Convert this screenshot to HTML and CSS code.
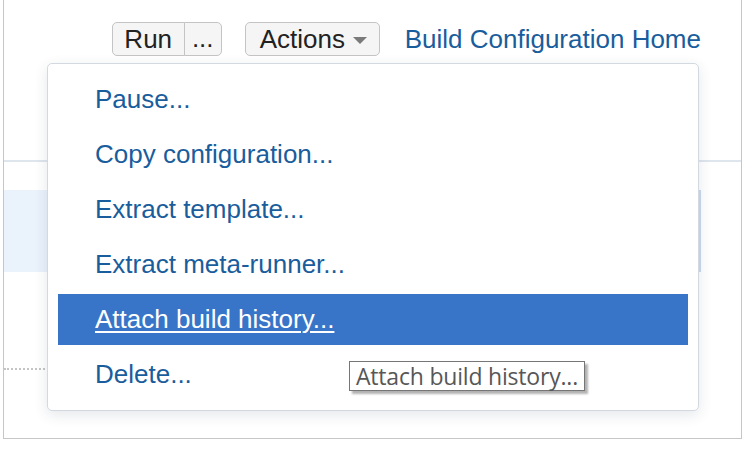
FILE: index.html
```html
<!DOCTYPE html>
<html>
<head>
<meta charset="utf-8">
<link rel="stylesheet" href="styles.css">
</head>
<body>
<div class="frame">
  <div class="toolbar">
    <div class="btn-group">
      <button class="btn btn-run">Run</button><button class="btn btn-more">...</button>
    </div>
    <button class="btn btn-actions">Actions <span class="caret"></span></button>
    <a class="home" href="#">Build Configuration Home</a>
  </div>
  <div class="header-line"></div>
  <div class="row-selected"></div>
  <div class="dotted"></div>

  <ul class="menu">
    <li class="item"><a href="#">Pause...</a></li>
    <li class="item"><a href="#">Copy configuration...</a></li>
    <li class="item"><a href="#">Extract template...</a></li>
    <li class="item"><a href="#">Extract meta-runner...</a></li>
    <li class="item active"><a href="#">Attach build history...</a></li>
    <li class="item"><a href="#">Delete...</a></li>
  </ul>
  <div class="tooltip"><span class="tip-text">Attach build history...</span></div>
</div>
</body>
</html>
```
FILE: styles.css
```css
html, body {
  margin: 0;
  padding: 0;
  background: #ffffff;
}
body {
  font-family: "Liberation Sans", Arial, sans-serif;
  width: 753px;
  height: 454px;
  overflow: hidden;
}
.frame {
  position: relative;
  margin-left: 3px;
  width: 737px;
  height: 438px;
  border: 1px solid #c6c6c6;
  border-top: none;
}
.toolbar {
  height: 160px;
  box-sizing: border-box;
  padding: 22px 40px 0 0;
  display: flex;
  justify-content: flex-end;
  align-items: flex-start;
}
.btn-group {
  display: flex;
}
.btn {
  font-family: "Liberation Sans", Arial, sans-serif;
  font-size: 26px;
  color: #222;
  background: #f5f5f5;
  border: 1px solid #c4c4c4;
  height: 34px;
  padding: 0;
  margin: 0;
  box-sizing: border-box;
  display: flex;
  align-items: center;
  line-height: 1;
}
.btn-run {
  width: 73px;
  justify-content: center;
  border-radius: 5px 0 0 5px;
}
.btn-more {
  width: 38px;
  justify-content: center;
  border-left: 1px solid #c4c4c4;
  margin-left: -1px;
  border-radius: 0 5px 5px 0;
  padding-bottom: 2px;
}
.btn-actions {
  margin-left: 23px;
  width: 135px;
  padding-left: 14px;
  border-radius: 5px;
}
.caret {
  display: inline-block;
  width: 0;
  height: 0;
  margin-left: 8px;
  margin-top: 3px;
  border-left: 7px solid transparent;
  border-right: 7px solid transparent;
  border-top: 7px solid #7a7a7a;
}
.home {
  margin-left: 25px;
  font-size: 26px;
  color: #195d9c;
  text-decoration: none;
  line-height: 34px;
}
.header-line {
  height: 2px;
  background: #dfe5ed;
}
.row-selected {
  margin-top: 28px;
  height: 82px;
  margin-right: 40px;
  background: #eaf2fc;
  border-right: 3px solid #c9dbef;
}
.dotted {
  margin-top: 96px;
  width: 60px;
  border-top: 2px dotted #c4c4c4;
}
.menu {
  position: absolute;
  left: 43px;
  top: 63px;
  width: 652px;
  height: 348px;
  box-sizing: border-box;
  margin: 0;
  padding: 10px 10px;
  list-style: none;
  display: flex;
  flex-direction: column;
  gap: 4px;
  background: #fff;
  border: 1px solid #d3d9e1;
  border-radius: 5px;
  box-shadow: 0 4px 14px rgba(40, 60, 90, 0.12);
}
.item {
  height: 51px;
  flex: 0 0 51px;
  display: flex;
  align-items: center;
  padding-left: 37px;
}
.item a {
  font-size: 26px;
  color: #195d9c;
  text-decoration: none;
}
.item.active {
  background: #3875c8;
}
.item.active a {
  color: #ffffff;
  text-decoration: underline;
  text-underline-offset: 3px;
  text-decoration-thickness: 2px;
}
.tooltip {
  position: absolute;
  left: 345px;
  top: 361px;
  width: 236px;
  height: 30px;
  box-sizing: border-box;
  border: 1px solid #767676;
  background: #fff;
  box-shadow: 3px 3px 2px rgba(0, 0, 0, 0.3);
  display: flex;
  align-items: center;
  padding-left: 6px;
}
.tip-text {
  font-family: "Open Sans", "Noto Sans", sans-serif;
  font-size: 23px;
  color: #575757;
  line-height: 24px;
  white-space: nowrap;
  letter-spacing: -0.2px;
}
```
